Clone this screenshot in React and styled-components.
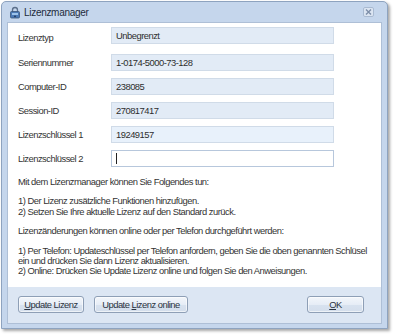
import React from "react";
import styled, { createGlobalStyle } from "styled-components";

const Global = createGlobalStyle`
  html, body { margin: 0; padding: 0; background: #ffffff; }
  body { font-family: "Liberation Sans", Arial, sans-serif; }
`;

const Page = styled.div`
  width: 394px;
  height: 335px;
  padding: 1px 0 0 1px;
  box-sizing: border-box;
`;

const Window = styled.div`
  width: 387px;
  height: 328px;
  box-sizing: border-box;
  background: #c5d6ec;
  border: 1px solid #8ea3bf;
  border-radius: 5px 5px 0 0;
  box-shadow: 2px 2px 3px rgba(0, 0, 0, 0.35);
  display: flex;
  flex-direction: column;
  padding: 0 5px 4px 5px;
`;

const TitleBar = styled.div`
  height: 20px;
  display: flex;
  align-items: center;
  gap: 3px;
  padding-left: 2px;
  padding-right: 8px;
`;

const Title = styled.span`
  font-size: 10px;
  color: #1e2b3c;
  letter-spacing: -0.3px;
  flex: 1;
`;

const Client = styled.div`
  flex: 1;
  display: flex;
  flex-direction: column;
  border: 1px solid #aebfd6;
`;

const Content = styled.div`
  background: #ffffff;
  height: 264px;
  box-sizing: border-box;
  padding: 4px 0 0 10px;
`;

const Fields = styled.div`
  display: grid;
  grid-template-columns: 93px 223px;
  row-gap: 7px;
  align-items: center;
`;

const small = `
  font-size: 9.4px;
  letter-spacing: -0.5px;
`;

const Label = styled.div`
  ${small}
  color: #333333;
`;

const Field = styled.div`
  height: 17px;
  box-sizing: border-box;
  background: ${(p) => (p.$editable ? "#ffffff" : p.$focus ? "#e8f1fb" : "#e2ebf6")};
  border: 1px solid ${(p) => (p.$editable ? "#b7c7dc" : "#d0dbe8")};
  ${small}
  color: #2e2e2e;
  display: flex;
  align-items: center;
  padding-left: 4px;
  margin-bottom: ${(p) => (p.$first ? "3px" : "0")};
`;

const Caret = styled.span`
  display: inline-block;
  width: 1px;
  height: 11px;
  background: #222;
`;

const Text = styled.div`
  margin-top: 10px;
  ${small}
  line-height: 10.4px;
  color: #333333;
  display: flex;
  flex-direction: column;
  gap: 9px;
`;

const ButtonBar = styled.div`
  flex: 1;
  background: #dce6f3;
  display: flex;
  align-items: center;
  padding: 0 17px 2px 10px;
  gap: 10px;
`;

const Button = styled.button`
  height: 17px;
  width: ${(p) => p.$w}px;
  box-sizing: border-box;
  border: 1px solid #8e9fb6;
  border-radius: 3px;
  background: linear-gradient(#f3f6fb 0%, #e6edf6 50%, #d8e2ef 51%, #d3deec 100%);
  box-shadow: inset 0 0 0 1px rgba(255, 255, 255, 0.6);
  font-family: "Liberation Sans", Arial, sans-serif;
  ${small}
  color: #2a3240;
  padding: 0;
  margin-left: ${(p) => (p.$right ? "auto" : "0")};
`;

const LockIcon = () => (
  <svg width="12" height="13" viewBox="0 0 12 13">
    <path d="M3.5 6V4a2.5 2.5 0 0 1 5 0v2" fill="none" stroke="#5b6f8a" strokeWidth="1.3" />
    <rect x="1.5" y="5.5" width="9" height="6.5" rx="1" fill="#4a79b5" stroke="#3a5578" strokeWidth="0.8" />
    <rect x="3" y="7" width="6" height="2" fill="#9cc3ea" />
    <circle cx="6" cy="10.3" r="0.9" fill="#1e3355" />
  </svg>
);

const CloseIcon = () => (
  <svg width="11" height="10" viewBox="0 0 11 10">
    <rect x="0.5" y="0.5" width="10" height="9" rx="1.5" fill="#dbe5f2" stroke="#a9bad1" />
    <path d="M3 2.5l5 5M8 2.5l-5 5" stroke="#7c8ea8" strokeWidth="1.4" />
  </svg>
);

const rows = [
  ["Lizenztyp", "Unbegrenzt"],
  ["Seriennummer", "1-0174-5000-73-128"],
  ["Computer-ID", "238085"],
  ["Session-ID", "270817417"],
  ["Lizenzschlüssel 1", "19249157"],
];

export default function App() {
  return (
    <Page>
      <Global />
      <Window>
        <TitleBar>
          <LockIcon />
          <Title>Lizenzmanager</Title>
          <CloseIcon />
        </TitleBar>
        <Client>
          <Content>
            <Fields>
              {rows.map(([l, v], i) => (
                <React.Fragment key={l}>
                  <Label>{l}</Label>
                  <Field $first={i === 0} $focus={i === 4}>{v}</Field>
                </React.Fragment>
              ))}
              <Label>Lizenzschlüssel 2</Label>
              <Field $editable>
                <Caret />
              </Field>
            </Fields>
            <Text>
              <div>Mit dem Lizenzmanager können Sie Folgendes tun:</div>
              <div>
                1) Der Lizenz zusätzliche Funktionen hinzufügen.
                <br />
                2) Setzen Sie Ihre aktuelle Lizenz auf den Standard zurück.
              </div>
              <div>Lizenzänderungen können online oder per Telefon durchgeführt werden:</div>
              <div>
                1) Per Telefon: Updateschlüssel per Telefon anfordern, geben Sie die oben genannten Schlüsel
                <br />
                ein und drücken Sie dann Lizenz aktualisieren.
                <br />
                2) Online: Drücken Sie Update Lizenz online und folgen Sie den Anweisungen.
              </div>
            </Text>
          </Content>
          <ButtonBar>
            <Button $w={66}>
              <u>U</u>pdate Lizenz
            </Button>
            <Button $w={94}>
              Update <u>L</u>izenz online
            </Button>
            <Button $w={57} $right>
              <u>O</u>K
            </Button>
          </ButtonBar>
        </Client>
      </Window>
    </Page>
  );
}
